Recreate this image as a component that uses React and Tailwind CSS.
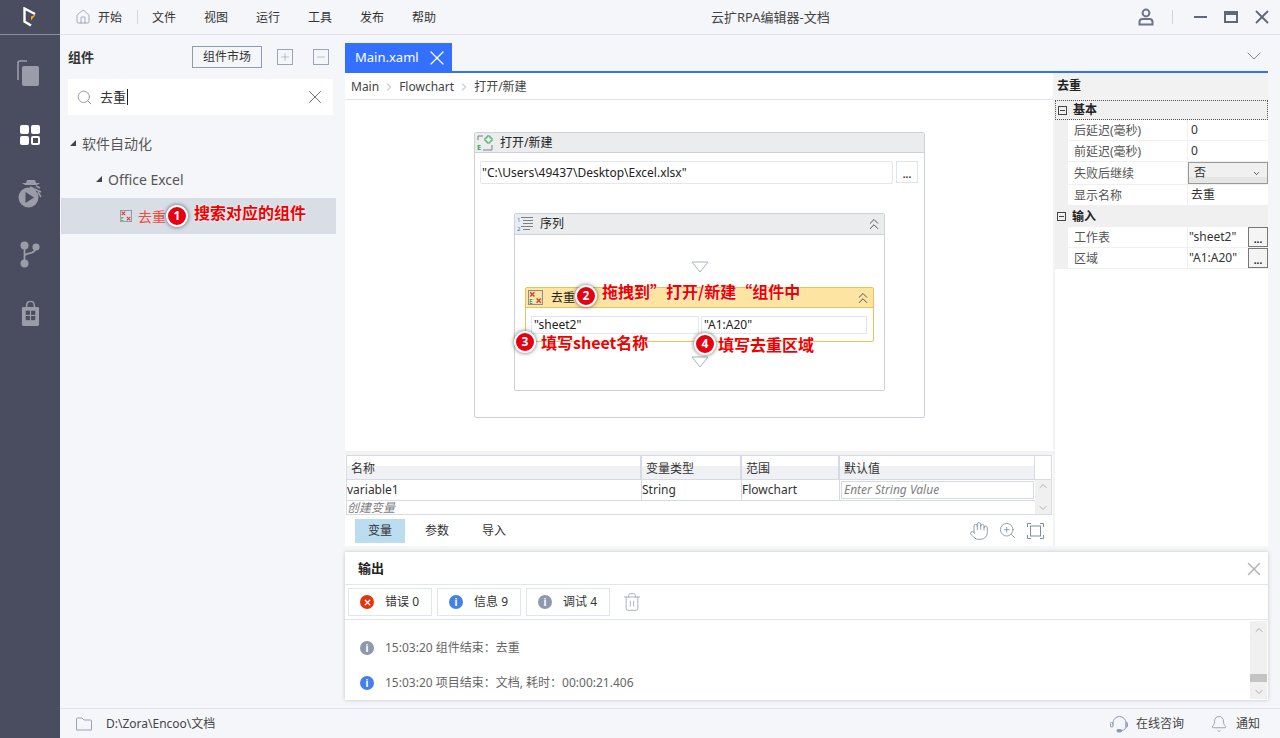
import React from "react";
import { Home, Search, X, ChevronDown, ChevronUp, ChevronsUp, ChevronRight, Hand, ZoomIn, Trash2, Bell, Plus, Minus } from "lucide-react";

const menus = ["文件", "视图", "运行", "工具", "发布", "帮助"];

const Logo = () => (
  <svg width="14" height="20" viewBox="0 0 14 20" fill="none">
    <path d="M12 7 L1.5 1.5 V14.5 L8 18.5" stroke="#fff" strokeWidth="2.4" />
    <path d="M12.8 7.5 L8 9.6 V13.4 Z" fill="#f5a623" />
  </svg>
);

const DocsIcon = () => (
  <svg width="22" height="26" viewBox="0 0 22 26" fill="#9a9ca8">
    <rect x="5" y="6" width="17" height="20" rx="2" />
    <path d="M1 20 V3 a2 2 0 0 1 2-2 H10" fill="none" stroke="#9a9ca8" strokeWidth="1.6" />
  </svg>
);

const GridIcon = () => (
  <svg width="20" height="20" viewBox="0 0 20 20" fill="#fff">
    <rect x="0" y="0" width="9" height="9" rx="2" />
    <rect x="11" y="0" width="9" height="9" rx="2" />
    <rect x="0" y="11" width="9" height="9" rx="2" />
    <rect x="12" y="12" width="7" height="7" rx="1" fill="none" stroke="#fff" strokeWidth="2" />
  </svg>
);

const DebugIcon = () => (
  <svg width="24" height="30" viewBox="0 0 24 30">
    <circle cx="10.5" cy="19.5" r="10" fill="#9a9ca8" />
    <path d="M7.5 14 L16 19.5 L7.5 25 Z" fill="#4a4d60" />
    <path d="M9 2 H17 L18 5 H8 Z" fill="#9a9ca8" />
    <path d="M4 5 H22 L19 7 H7 Z" fill="#9a9ca8" />
    <path d="M12 9 L23 14 M18 8 L22 10 M20 14 L23 19" stroke="#9a9ca8" strokeWidth="1.5" fill="none" />
  </svg>
);

const BranchIcon = () => (
  <svg width="20" height="27" viewBox="0 0 20 27" fill="#9a9ca8">
    <circle cx="4.5" cy="4.5" r="4" />
    <circle cx="16" cy="6" r="3.6" />
    <circle cx="4.5" cy="22.5" r="4" />
    <path d="M4.5 6 V21 M4.5 15 C6 11 14 14 15.5 8" fill="none" stroke="#9a9ca8" strokeWidth="1.8" />
  </svg>
);

const BagIcon = () => (
  <svg width="19" height="26" viewBox="0 0 20 27" fill="#9a9ca8">
    <path d="M6 6 V4 a4 4 0 0 1 8 0 V6" fill="none" stroke="#9a9ca8" strokeWidth="1.6" />
    <rect x="1" y="6" width="18" height="20" rx="1.5" />
    <rect x="5" y="10" width="4.4" height="4.4" fill="#4a4d60" />
    <rect x="10.6" y="10" width="4.4" height="4.4" fill="#4a4d60" />
    <rect x="5" y="15.6" width="4.4" height="4.4" fill="#4a4d60" />
    <rect x="10.6" y="15.6" width="4.4" height="4.4" fill="#4a4d60" />
  </svg>
);

const UserIcon = () => (
  <svg width="16" height="18" viewBox="0 0 16 18" fill="none" stroke="#6b7488" strokeWidth="2">
    <circle cx="8" cy="5" r="3.4" />
    <path d="M1.5 16.5 V14 a3 3 0 0 1 3-3 h7 a3 3 0 0 1 3 3 V16.5 Z" />
  </svg>
);

const FolderIcon = () => (
  <svg width="16" height="14" viewBox="0 0 16 14" fill="none" stroke="#9aa3b5">
    <path d="M.5 2 a1 1 0 0 1 1-1 H6 L8 3 H14.5 a1 1 0 0 1 1 1 V13 H.5 Z" />
  </svg>
);

const HeadsetIcon = () => (
  <svg width="18" height="18" viewBox="0 0 18 18" fill="none" stroke="#8e99b0">
    <path d="M3 10 V8 a6.5 6.5 0 0 1 13 0 V11 C16 14 14 15.5 11 15.5" />
    <rect x=".5" y="7.5" width="2.5" height="4.5" rx="1" />
    <rect x="16" y="7.5" width="1.5" height="4.5" rx=".7" />
    <rect x="7" y="14.5" width="4.5" height="2.5" rx="1" fill="#8e99b0" />
  </svg>
);

// the small excel activity glyphs
const DedupIcon = ({ size = 14 }) => (
  <svg width={size} height={size} viewBox="0 0 14 14">
    <rect x=".5" y=".5" width="13" height="13" fill="none" stroke="#8a8f9a" />
    <path d="M2 2 L6 6 M6 2 L2 6 M8 8 L12 12 M12 8 L8 12" stroke="#e53935" strokeWidth="1.3" />
    <rect x="1" y="8" width="3" height="5" fill="#fff" />
    <text x="1" y="13" fontSize="6" fontWeight="700" fill="#3aa655">E</text>
  </svg>
);

const OpenIcon = () => (
  <svg width="16" height="16" viewBox="0 0 16 16" fill="none">
    <path d="M1 5 V1 H6 M15 10 V15 H6" stroke="#7a808c" />
    <path d="M10 1 h3 v2 h2 v3 h-2 v2 h-3 v-2 h-2 v-3 h2 Z" stroke="#3aa655" />
    <text x="0" y="15" fontSize="7" fontWeight="700" fill="#3aa655">E</text>
  </svg>
);

const SeqIcon = () => (
  <svg width="16" height="16" viewBox="0 0 16 16">
    <path d="M4 1.5 H16 M6 4.5 H16 M6 7.5 H16 M4 10.5 H16 M6 13.5 H13" stroke="#7a808c" />
    <text x="0" y="6" fontSize="6" fill="#3370ff">1</text>
    <text x="0" y="15" fontSize="6" fill="#3370ff">2</text>
  </svg>
);

const Tri = () => (
  <svg width="18" height="12" viewBox="0 0 18 12" fill="#fff" stroke="#a9b2bd">
    <path d="M1 1 H17 L9 11 Z" />
  </svg>
);

const InfoDot = ({ color }) => (
  <span className={`flex h-[14px] w-[14px] shrink-0 items-center justify-center rounded-full text-[10px] font-bold leading-none text-white ${color}`}>
    i
  </span>
);

const Badge = ({ n, className }) => (
  <span className={`absolute flex h-[22px] w-[22px] items-center justify-center rounded-full border-2 border-white bg-[#e60012] text-[12px] font-bold leading-none text-white shadow-[0_0_4px_rgba(0,0,0,0.6)] ${className}`}>
    {n}
  </span>
);

const Note = ({ children, className }) => (
  <span className={`absolute whitespace-nowrap font-['Noto_Sans_CJK_SC',sans-serif] text-[16px] font-bold leading-none text-[#f00000] [text-shadow:0_0_2px_#fff,0_0_2px_#fff] ${className}`}>
    {children}
  </span>
);

const PropRow = ({ label, tall, children }) => (
  <div className={`flex border-b border-[#f0f0f0] text-[12px] text-[#333] ${tall ? "h-[23px]" : "h-[21px]"}`}>
    <div className="w-[13px] shrink-0 bg-[#f0f0f0]" />
    <div className="flex w-[119px] shrink-0 items-center pl-[6px] pt-px text-[#555]">{label}</div>
    <div className="flex min-w-0 flex-1 items-center border-l border-[#f0f0f0]">{children}</div>
  </div>
);

const GroupRow = ({ label, outlined }) => (
  <div className={`flex items-center gap-[6px] bg-[#f0f0f0] pl-[2px] text-[12px] font-bold text-[#222] ${outlined ? "h-[20px] border border-dotted border-[#555]" : "h-[21px]"}`}>
    <span className="flex h-[9px] w-[9px] items-center justify-center border border-[#444]">
      <span className="h-px w-[5px] bg-[#444]" />
    </span>
    {label}
  </div>
);

const DotsBtn = () => (
  <span className="flex h-[20px] w-[20px] shrink-0 items-end justify-center border border-[#777] bg-[#f4f4f4] pb-[2px] text-[10px] font-bold leading-none text-[#222]">
    ...
  </span>
);

const FilterBtn = ({ icon, label, count }) => (
  <div className="flex h-[28px] w-[84px] items-center gap-[11px] border border-[#e1e5ee] pl-[11px] text-[12px] text-[#333]">
    {icon}
    <span>
      {label} {count}
    </span>
  </div>
);

export default function App() {
  return (
    <div className="flex h-[738px] w-[1280px] overflow-hidden bg-[#f5f6fa] font-['Noto_Sans','Noto_Sans_CJK_SC',sans-serif] text-[#333]">
      {/* left rail */}
      <aside className="flex w-[60px] shrink-0 flex-col items-center bg-[#4a4d60]">
        <div className="flex h-[35px] w-full items-center justify-center border-b border-[#8b8e9c]">
          <Logo />
        </div>
        <div className="mr-[4px] mt-[25px]"><DocsIcon /></div>
        <div className="mt-[39px]"><GridIcon /></div>
        <div className="mt-[33px]"><DebugIcon /></div>
        <div className="mt-[33px]"><BranchIcon /></div>
        <div className="mt-[33px]"><BagIcon /></div>
      </aside>

      <div className="flex min-w-0 flex-1 flex-col">
        {/* title bar */}
        <header className="relative flex h-[35px] shrink-0 items-center border-b border-[#dfe3ee] pl-[15px] pr-[7px] text-[12px]">
          <Home size={16} strokeWidth={1} className="text-[#7b8698]" />
          <span className="ml-[7px] pt-px">开始</span>
          <span className="ml-[15px] h-[14px] w-px bg-[#d5d9e2]" />
          <nav className="ml-[14px] flex gap-[28px] pt-px">
            {menus.map((m) => (
              <span key={m}>{m}</span>
            ))}
          </nav>
          <span className="absolute left-[651px] pt-px text-[13px] text-[#444]">云扩RPA编辑器-文档</span>
          <div className="ml-auto flex items-center">
            <UserIcon />
            <span className="ml-[18px] h-[14px] w-px bg-[#cfd3dc]" />
            <span className="ml-[21px] h-[2px] w-[13px] bg-[#5f6877]" />
            <span className="ml-[17px] h-[12px] w-[14px] border-2 border-t-[4px] border-[#5f6877]" />
            <X size={22} strokeWidth={2} className="ml-[13px] text-[#5f6877]" />
          </div>
        </header>

        <div className="flex min-h-0 flex-1">
          {/* component panel */}
          <section className="w-[285px] shrink-0">
            <div className="flex h-[44px] items-center pl-[8px] pr-[16px]">
              <span className="pt-[2px] text-[13px] font-bold text-[#333]">组件</span>
              <span className="ml-auto flex h-[22px] w-[70px] items-center justify-center border border-[#8f9bb0] text-[12px] text-[#333]">
                组件市场
              </span>
              <span className="ml-[15px] flex h-[16px] w-[16px] items-center justify-center border border-[#9aa5b8]">
                <Plus size={12} strokeWidth={1} className="text-[#7f8ba0]" />
              </span>
              <span className="ml-[20px] flex h-[16px] w-[16px] items-center justify-center border border-[#9aa5b8]">
                <Minus size={12} strokeWidth={1} className="text-[#7f8ba0]" />
              </span>
            </div>
            <div className="ml-[8px] flex h-[36px] w-[265px] items-center bg-white pl-[8px] pr-[7px] text-[13px]">
              <Search size={17} strokeWidth={1.2} className="text-[#8a8f9a]" />
              <span className="ml-[7px] border-r border-[#222] pr-px leading-[16px]">去重</span>
              <X size={22} strokeWidth={1} className="ml-auto text-[#666]" />
            </div>
            <div className="mt-[10px] flex h-[36px] items-center pl-[10px] text-[14px] text-[#555]">
              <span className="mr-[6px] h-0 w-0 border-b-[6px] border-l-[6px] border-b-[#444] border-l-transparent" />
              软件自动化
            </div>
            <div className="flex h-[36px] items-center pl-[36px] text-[14px] text-[#555]">
              <span className="mr-[6px] h-0 w-0 border-b-[6px] border-l-[6px] border-b-[#444] border-l-transparent" />
              Office Excel
            </div>
            <div className="relative ml-px mt-px flex h-[36px] w-[275px] items-center bg-[#d9dde6] pl-[59px] text-[14px] text-[#f04a3a]">
              <DedupIcon size={12} />
              <span className="ml-[6px]">去重</span>
              <Badge n="1" className="left-[105px] top-[7px]" />
              <Note className="left-[133px] top-[6px]">搜索对应的组件</Note>
            </div>
          </section>

          {/* editor */}
          <section className="flex w-[923px] shrink-0 flex-col">
            <div className="flex h-[36px] shrink-0 items-end">
              <div className="flex h-[28px] w-[107px] items-center justify-between bg-[#3370ff] pl-[10px] pr-[3px] pt-px text-[13px] text-white">
                Main.xaml
                <X size={24} strokeWidth={1.2} />
              </div>
              <ChevronDown size={24} strokeWidth={1} className="mb-[3px] ml-auto mr-[2px] text-[#7b8698]" />
            </div>
            <div className="h-[2px] shrink-0 bg-[#3370ff]" />

            <div className="flex h-[473px] shrink-0 bg-[#f3f3f3]">
              <div className="flex w-[708px] shrink-0 flex-col bg-white">
                {/* breadcrumb */}
                <div className="flex h-[27px] shrink-0 items-center gap-[4px] border-b border-[#dfe3ee] pl-[6px] pt-px text-[12px] text-[#444]">
                  Main
                  <ChevronRight size={12} strokeWidth={2.5} className="text-[#c9ced8]" />
                  Flowchart
                  <ChevronRight size={12} strokeWidth={2.5} className="text-[#c9ced8]" />
                  打开/新建
                </div>

                {/* canvas */}
                <div className="h-[351px] shrink-0 pl-[129px] pt-[32px]">
                  <div className="h-[286px] w-[451px] rounded-[2px] border border-[#cdd2da] bg-white">
                    <div className="flex h-[20px] items-center gap-[7px] border-b border-[#cdd2da] bg-[#ebecee] pl-[2px] text-[12px] text-[#222]">
                      <OpenIcon />
                      打开/新建
                    </div>
                    <div className="ml-[5px] mt-[8px] flex gap-[3px]">
                      <div className="flex h-[23px] w-[413px] items-center rounded-[2px] border border-[#e3e6ee] pl-px text-[12px] text-[#222]">
                        "C:\Users\49437\Desktop\Excel.xlsx"
                      </div>
                      <div className="flex h-[22px] w-[22px] items-end justify-center border border-[#dfe3ee] pb-[3px] text-[10px] font-bold leading-none">
                        ...
                      </div>
                    </div>

                    <div className="ml-[39px] mt-[29px] flex h-[178px] w-[371px] flex-col items-center rounded-[2px] border border-[#cdd2da]">
                      <div className="flex h-[21px] w-full shrink-0 items-center gap-[7px] border-b border-[#cdd2da] bg-[#ebecee] pl-[2px] pr-[1px] text-[12px] text-[#222]">
                        <SeqIcon />
                        序列
                        <ChevronsUp size={18} strokeWidth={1.2} className="ml-auto text-[#444]" />
                      </div>
                      <div className="mt-[26px] flex"><Tri /></div>

                      <div className="relative mt-[14px] h-[55px] w-[349px] rounded-[2px] border border-[#eebf55]">
                        <div className="flex h-[20px] items-center gap-[8px] border-b border-[#eebf55] bg-[#fde4a2] pl-[2px] pr-[1px] text-[12px] text-[#222]">
                          <DedupIcon size={15} />
                          去重
                          <ChevronsUp size={18} strokeWidth={1.2} className="ml-auto text-[#444]" />
                        </div>
                        <div className="ml-[5px] mt-[8px] flex gap-[2px] text-[12px] leading-none text-[#222]">
                          <div className="flex h-[18px] w-[168px] items-center border border-[#e3e6ee] bg-white pl-[2px]">"sheet2"</div>
                          <div className="flex h-[18px] w-[166px] items-center border border-[#e3e6ee] bg-white pl-[2px]">"A1:A20"</div>
                        </div>
                        <Badge n="2" className="left-[49px] top-[-3px]" />
                        <Note className="left-[76px] top-[-5px]">拖拽到”打开/新建“组件中</Note>
                        <Badge n="3" className="left-[-12px] top-[43px]" />
                        <Note className="left-[15px] top-[46px]">填写sheet名称</Note>
                        <Badge n="4" className="left-[168px] top-[45px]" />
                        <Note className="left-[192px] top-[48px]">填写去重区域</Note>
                      </div>

                      <div className="mt-[14px] flex"><Tri /></div>
                    </div>
                  </div>
                </div>

                {/* variables */}
                <div className="h-[4px] shrink-0 bg-[#f3f3f3]" />
                <div className="mx-px h-[60px] shrink-0 border border-[#d5dae6] text-[12px] text-[#333]">
                  <div className="grid h-[24px] grid-cols-[295px_100px_98px_195px_1fr] border-b border-[#d5dae6] bg-[linear-gradient(#fff_45%,#eff1f5_45%)]">
                    <div className="flex items-center border-r-2 border-[#d5dae6] pl-[4px] pt-[2px]">名称</div>
                    <div className="flex items-center border-r-2 border-[#d5dae6] pl-[4px] pt-[2px]">变量类型</div>
                    <div className="flex items-center border-r-2 border-[#d5dae6] pl-[4px] pt-[2px]">范围</div>
                    <div className="flex items-center border-r border-[#d5dae6] pl-[4px] pt-[2px]">默认值</div>
                    <div className="bg-white" />
                  </div>
                  <div className="flex h-[34px]">
                    <div className="w-[688px] shrink-0">
                      <div className="grid h-[21px] grid-cols-[295px_100px_98px_195px] border-b border-[#d5dae6]">
                        <div className="flex items-center border-r border-[#d5dae6]">variable1</div>
                        <div className="flex items-center border-r border-[#d5dae6]">String</div>
                        <div className="flex items-center border-r border-[#d5dae6]">Flowchart</div>
                        <div className="flex items-center pl-px">
                          <div className="flex h-[18px] w-[193px] items-center border border-[#d5dae6] pl-[2px] italic text-[#808080]">Enter String Value</div>
                        </div>
                      </div>
                      <div className="flex h-[13px] items-center italic leading-none text-[#808080]">创建变量</div>
                    </div>
                    <div className="flex flex-1 flex-col items-center justify-between bg-[#f0f0f0] text-[#b0b0b0]">
                      <ChevronUp size={12} />
                      <ChevronDown size={12} />
                    </div>
                  </div>
                </div>
                <div className="flex h-[31px] shrink-0 items-center pl-[10px] pr-[9px] text-[12px] text-[#333]">
                  <span className="flex h-[24px] w-[50px] items-center justify-center bg-[#bcdcef] pt-px">变量</span>
                  <span className="ml-[20px] pt-px">参数</span>
                  <span className="ml-[33px] pt-px">导入</span>
                  <Hand size={20} strokeWidth={1} className="ml-auto text-[#7f8ba0]" />
                  <ZoomIn size={19} strokeWidth={1} className="ml-[9px] text-[#7f8ba0]" />
                  <span className="relative ml-[10px] flex h-[16px] w-[17px] items-center justify-center">
                    <svg width="17" height="16" viewBox="0 0 17 16" fill="none" stroke="#7f8ba0">
                      <path d="M.5 4 V.5 H4 M13 .5 H16.5 V4 M.5 12 V15.5 H4 M13 15.5 H16.5 V12" />
                      <rect x="3.5" y="3" width="10" height="10" />
                    </svg>
                  </span>
                </div>
              </div>

              {/* properties */}
              <div className="ml-[2px] w-[213px] shrink-0 bg-white">
                <div className="flex h-[26px] items-center bg-[#f2f2f2] pl-[2px] text-[12px] font-bold text-[#222]">去重</div>
                <div className="h-px bg-[#f2f2f2]" />
                <GroupRow label="基本" outlined />
                <PropRow label="后延迟(毫秒)"><span className="pl-[3px]">0</span></PropRow>
                <PropRow label="前延迟(毫秒)"><span className="pl-[3px]">0</span></PropRow>
                <PropRow label="失败后继续" tall>
                  <span className="flex h-[22px] flex-1 items-center justify-between border border-[#999] bg-[linear-gradient(#f0f0f0_70%,#e5e5e5_70%)] pl-[5px] pr-[6px]">
                    否
                    <ChevronDown size={9} />
                  </span>
                </PropRow>
                <PropRow label="显示名称"><span className="pl-[3px]">去重</span></PropRow>
                <GroupRow label="输入" />
                <PropRow label="工作表">
                  <span className="flex-1 truncate pl-px">"sheet2"</span>
                  <DotsBtn />
                </PropRow>
                <PropRow label="区域">
                  <span className="flex-1 truncate pl-px">"A1:A20"</span>
                  <DotsBtn />
                </PropRow>
              </div>
            </div>

            {/* output */}
            <div className="mt-[6px] h-[148px] shrink-0 bg-white shadow-[0_0_4px_rgba(0,0,0,0.2)]">
              <div className="flex h-[33px] items-center justify-between border-b border-[#e1e5ee] pl-[13px] pr-[3px] pt-[2px] text-[13px] font-bold text-[#222]">
                输出
                <X size={22} strokeWidth={1.6} className="text-[#b5b5b5]" />
              </div>
              <div className="flex h-[35px] items-center gap-[5px] border-b border-[#e1e5ee] pl-[3px]">
                <FilterBtn
                  label="错误"
                  count="0"
                  icon={
                    <span className="flex h-[14px] w-[14px] items-center justify-center rounded-full bg-[#e0350d]">
                      <X size={9} strokeWidth={3.5} className="text-white" />
                    </span>
                  }
                />
                <FilterBtn label="信息" count="9" icon={<InfoDot color="bg-[#4480e8]" />} />
                <FilterBtn label="调试" count="4" icon={<InfoDot color="bg-[#8e99b0]" />} />
                <Trash2 size={20} strokeWidth={0.9} className="ml-[7px] text-[#8e99b0]" />
              </div>
              <div className="flex h-[80px]">
                <div className="flex-1 pl-[15px] pt-[10px] text-[12px] text-[#666]">
                  <div className="flex h-[35px] items-center gap-[11px]">
                    <InfoDot color="bg-[#8e99b0]" />
                    15:03:20 组件结束：去重
                  </div>
                  <div className="flex h-[35px] items-center gap-[11px]">
                    <InfoDot color="bg-[#4480e8]" />
                    15:03:20 项目结束：文档, 耗时：00:00:21.406
                  </div>
                </div>
                <div className="mb-px mr-px mt-px flex w-[17px] flex-col items-center bg-[#f0f0f0] text-[#aaa]">
                  <ChevronUp size={12} className="mt-[3px]" />
                  <div className="mt-[38px] h-[8px] w-full bg-[#c4c4c4]" />
                  <ChevronDown size={12} className="mt-[4px]" />
                </div>
              </div>
            </div>
          </section>
        </div>

        {/* status bar */}
        <footer className="flex h-[30px] shrink-0 items-center border-t border-[#dfe3ee] pl-[16px] pr-[20px] text-[12px] text-[#444]">
          <FolderIcon />
          <span className="ml-[14px]">D:\Zora\Encoo\文档</span>
          <span className="ml-auto"><HeadsetIcon /></span>
          <span className="ml-[8px]">在线咨询</span>
          <Bell size={18} strokeWidth={1} className="ml-[26px] text-[#7f8ba0]" />
          <span className="ml-[8px]">通知</span>
        </footer>
      </div>
    </div>
  );
}
